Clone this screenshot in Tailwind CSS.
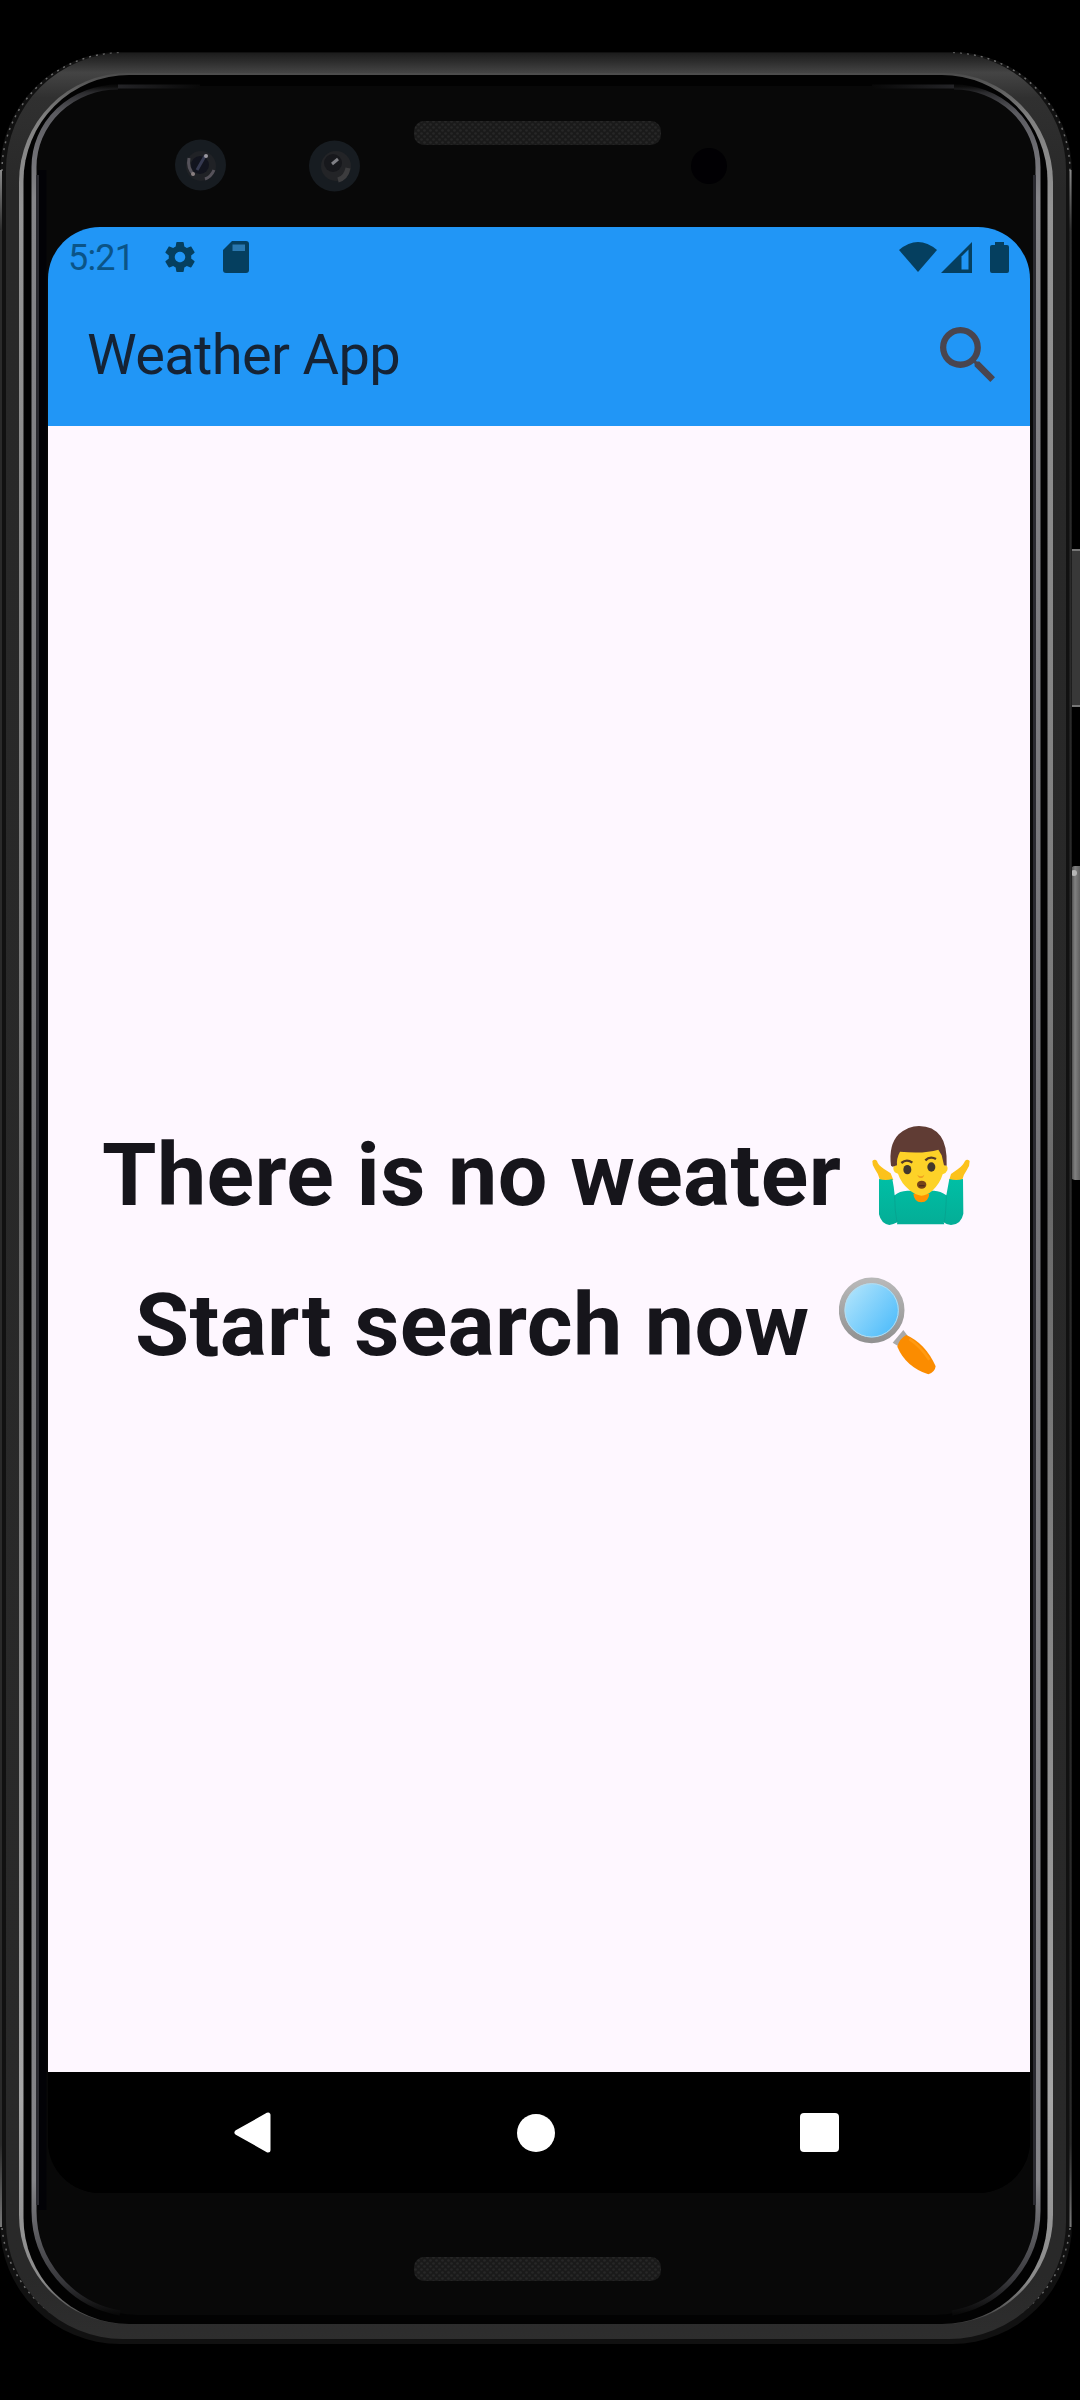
<!DOCTYPE html>
<html lang="en">
<head>
<meta charset="utf-8">
<title>Weather App</title>
<script src="https://cdn.jsdelivr.net/npm/@tailwindcss/browser@4"></script>
</head>
<body class="bg-black">
<div class="grid w-[1080px] h-[2400px] overflow-hidden bg-black font-['Roboto',sans-serif]">
  <!-- Phone body -->
  <svg class="col-start-1 row-start-1 block" width="1080" height="2400" viewBox="0 0 1080 2400" fill="none" aria-hidden="true">
    <defs>
      <linearGradient id="band" x1="0" y1="52" x2="0" y2="2344" gradientUnits="userSpaceOnUse">
        <stop offset="0" stop-color="#1a1a1a"/><stop offset=".004" stop-color="#2c2c2c"/><stop offset=".009" stop-color="#444"/><stop offset=".02" stop-color="#303030"/><stop offset=".06" stop-color="#282828"/><stop offset=".97" stop-color="#292929"/><stop offset="1" stop-color="#2e2e2e"/>
      </linearGradient>
      <linearGradient id="rim" x1="0" y1="72" x2="0" y2="2326" gradientUnits="userSpaceOnUse">
        <stop offset="0" stop-color="#4a4a4a"/><stop offset=".02" stop-color="#808080"/><stop offset=".06" stop-color="#949494"/><stop offset=".42" stop-color="#7a7a7a"/><stop offset=".5" stop-color="#686868"/><stop offset=".9" stop-color="#a6a6a6"/><stop offset=".98" stop-color="#8a8a8a"/><stop offset="1" stop-color="#383838"/>
      </linearGradient>
      <linearGradient id="glass" x1="0" y1="86" x2="0" y2="2314" gradientUnits="userSpaceOnUse">
        <stop offset="0" stop-color="#0a0a0a"/><stop offset=".003" stop-color="#2c2c2f"/><stop offset=".012" stop-color="#5b5b60"/><stop offset=".05" stop-color="#858589"/><stop offset=".5" stop-color="#737377"/><stop offset=".94" stop-color="#858589"/><stop offset=".985" stop-color="#38383c"/><stop offset="1" stop-color="#080808"/>
      </linearGradient>
      <linearGradient id="edge" x1="0" y1="170" x2="0" y2="2227" gradientUnits="userSpaceOnUse">
        <stop offset="0" stop-color="#8a8a8a"/><stop offset=".03" stop-color="#2a2a2a"/><stop offset=".96" stop-color="#2a2a2a"/><stop offset="1" stop-color="#777"/>
      </linearGradient>
      <linearGradient id="key" x1="1070" y1="0" x2="1080" y2="0" gradientUnits="userSpaceOnUse">
        <stop offset="0" stop-color="#333"/><stop offset=".5" stop-color="#818181"/><stop offset="1" stop-color="#606060"/>
      </linearGradient>
      <linearGradient id="tailL" x1="118" y1="0" x2="200" y2="0" gradientUnits="userSpaceOnUse">
        <stop offset="0" stop-color="#242427"/><stop offset="1" stop-color="#080808"/>
      </linearGradient>
      <linearGradient id="tailR" x1="954" y1="0" x2="872" y2="0" gradientUnits="userSpaceOnUse">
        <stop offset="0" stop-color="#242427"/><stop offset="1" stop-color="#080808"/>
      </linearGradient>
      <pattern id="mesh" width="6" height="6" patternUnits="userSpaceOnUse">
        <rect width="6" height="6" fill="#1a1a1a"/><circle cx="1.5" cy="1.5" r="1.3" fill="#272727"/><circle cx="4.5" cy="4.5" r="1.3" fill="#272727"/>
      </pattern>
    </defs>
    <rect x="1069" y="549" width="16" height="158" rx="3" fill="#383838"/>
    <path d="M1071 550h9M1071 706h9" stroke="#777" stroke-width="2"/>
    <rect x="1070" y="866" width="16" height="314" rx="5" fill="url(#key)"/>
    <circle cx="1074" cy="873" r="3" fill="#b5b5b5"/>
    <rect x="0" y="52" width="1072" height="2292" rx="120" fill="#111"/>
    <path d="M2 171A118 118 0 0 1 119 53M953 53A118 118 0 0 1 1070 171M2 2228A118 118 0 0 0 50 2312M1070 2228A118 118 0 0 1 1022 2312" stroke="#6c6c6c" stroke-width="1.5" stroke-dasharray="2 5"/>
    <path d="M1 170V2227M1070.500 170V2227" stroke="url(#edge)" stroke-width="2"/>
    <rect x="6" y="53" width="1060" height="2286" rx="117" fill="url(#band)"/>
    <rect x="19" y="73" width="1034" height="2251" rx="109" fill="url(#rim)"/>
    <rect x="23.500" y="75" width="1024" height="2249" rx="106" fill="#020202"/>
    <path d="M35 166A80 80 0 0 1 115 86H960A80 80 0 0 1 1038 166V2212A103 103 0 0 1 935 2315H138A103 103 0 0 1 35 2212Z" fill="#080808"/>
    <path d="M42 170V2210" stroke="#020206" stroke-width="9"/>
    <path d="M118 87A84 80 0 0 0 34 167V2211A104 104 0 0 0 120 2313M954 87A84 80 0 0 1 1038 167V2211A104 104 0 0 1 952 2313" stroke="url(#glass)" stroke-width="5"/>
    <rect x="118" y="84.500" width="82" height="4" fill="url(#tailL)"/>
    <rect x="872" y="84.500" width="82" height="4" fill="url(#tailR)"/>
    <path d="M37.500 175V2205M1034.500 175V2205" stroke="#2a2a30" stroke-width="3"/>
    <!-- Speakers -->
    <rect x="414" y="121" width="247" height="24" rx="10" fill="url(#mesh)"/>
    <rect x="414" y="2257" width="247" height="24" rx="10" fill="url(#mesh)"/>
    <!-- Cameras -->
    <circle cx="200.500" cy="165" r="25.500" fill="#171c21"/>
    <circle cx="201" cy="166" r="15" fill="#202226"/><circle cx="200" cy="165" r="9" fill="#12141e"/>
    <path d="M189 158q-2 10 5 17M214 170q-3 7-9 9" stroke="#55525a" stroke-width="3"/>
    <path d="M205 156l-8 14" stroke="#353950" stroke-width="3"/><circle cx="206" cy="156" r="2" fill="#9a98a0"/><circle cx="193" cy="174" r="2" fill="#8a7f80"/>
    <circle cx="334.500" cy="166" r="25.500" fill="#171c21"/>
    <circle cx="336" cy="166" r="15" fill="#232427"/><circle cx="333" cy="163" r="9" fill="#17181c"/>
    <path d="M348 168q-2 10-10 12" stroke="#3c3c3e" stroke-width="5"/><path d="M332 164l6-5" stroke="#808086" stroke-width="3"/>
    <circle cx="709" cy="166" r="18" fill="#010003"/>
  </svg>

  <!-- Screen -->
  <main class="z-10 col-start-1 row-start-1 mt-[227px] ml-12 flex h-[1966px] w-[982px] flex-col overflow-hidden rounded-[52px] bg-black">
    <header class="flex h-[199px] flex-col bg-[#2196f6]">
      <div class="flex h-[60px] items-center justify-between pr-[21px] pl-[20px] text-[#053f5f]">
        <div class="flex items-center">
          <span class="w-[97px] pt-[2px] text-[36px] leading-[58px] tracking-[-0.8px] text-[#0b5487]">5:21</span>
          <svg class="-ml-[3px]" width="36" height="36" viewBox="0 0 24 24" fill="currentColor"><path d="M19.430 12.980c.04-.32.070-.64.070-.98s-.03-.66-.07-.98l2.110-1.650c.19-.15.240-.42.120-.64l-2-3.460c-.12-.22-.39-.3-.61-.22l-2.490 1c-.52-.4-1.080-.73-1.690-.98l-.38-2.650C14.460 2.180 14.250 2 14 2h-4c-.25 0-.46.180-.49.420l-.38 2.650c-.61.250-1.170.590-1.690.98l-2.490-1c-.23-.09-.49 0-.61.220l-2 3.460c-.13.220-.07.490.120.640l2.110 1.650c-.04.320-.07.650-.07.980s.03.660.070.980l-2.110 1.650c-.19.150-.24.420-.12.640l2 3.460c.12.220.390.300.610.220l2.490-1c.52.400 1.080.730 1.690.98l.38 2.650c.03.240.240.420.490.420h4c.25 0 .46-.18.490-.42l.38-2.650c.61-.25 1.170-.59 1.690-.98l2.490 1c.23.090.490 0 .61-.22l2-3.460c.12-.22.070-.49-.12-.64l-2.110-1.650zM12 15.500c-1.930 0-3.500-1.570-3.500-3.500s1.570-3.500 3.500-3.500 3.500 1.570 3.500 3.500-1.570 3.500-3.500 3.500z"/></svg>
          <svg class="ml-[25px]" width="26" height="32" viewBox="0 0 26 32"><path d="M9 0H23Q26 0 26 3V29Q26 32 23 32H3Q0 32 0 29V9Z" fill="currentColor"/><path d="M9.500 3.500H22V10H9.500Z" fill="#2a78b0"/></svg>
        </div>
        <div class="flex items-center">
          <svg width="38" height="30" viewBox="0 0 38 30" fill="currentColor"><path d="M0 8Q19-8 38 8L19 30Z"/></svg>
          <svg class="ml-[4px]" width="31" height="31" viewBox="0 0 31 31"><path d="M0 31L31 0V31Z" fill="currentColor"/><path d="M20.500 14.500L27.500 7.500V27.500H20.500Z" fill="#2196f6"/></svg>
          <svg class="ml-[18px]" width="19" height="31" viewBox="0 0 19 31" fill="currentColor"><path d="M5 0H14V3H17Q19 3 19 5V29Q19 31 17 31H2Q0 31 0 29V5Q0 3 2 3H5Z"/></svg>
        </div>
      </div>
      <div class="flex h-[139px] items-center justify-between pr-[35px] pb-[4px] pl-[39px]">
        <h1 class="text-[56px] leading-[64px] tracking-[-0.65px] whitespace-nowrap text-[#152335]">Weather App</h1>
        <svg width="55" height="55" viewBox="3 3 17.490 17.490" fill="#49454f"><path d="M15.500 14h-.79l-.28-.27A6.471 6.471 0 0 0 16 9.500 6.500 6.500 0 1 0 9.500 16c1.610 0 3.090-.59 4.230-1.570l.27.280v.79l5 4.990L20.490 19l-4.990-5zm-6 0C7.010 14 5 11.990 5 9.500S7.010 5 9.500 5 14 7.010 14 9.500 11.990 14 9.500 14z"/></svg>
      </div>
    </header>

    <section class="flex flex-1 flex-col items-center justify-center bg-[#fef7ff] pt-[2px] pr-[6px] text-[88px] leading-[150px] font-bold text-[#16151b]">
      <p class="flex h-[150px] w-[868px] items-center justify-between whitespace-nowrap">
        <span class="tracking-[0.4px]">There is no weater</span>
        <svg width="98" height="99" viewBox="90 75 294 297" role="img" aria-label="Man shrugging">
          <defs><linearGradient id="shirt" x1="0" y1="0" x2="0" y2="1"><stop offset="0" stop-color="#00bfa5"/><stop offset="1" stop-color="#04ad96"/></linearGradient></defs>
          <path d="M91 180q8-8 14 0 3 12 20 23l21 14 8 20h-40q-4-17-15-32-9-12-8-25zM383 180q-8-8-14 0-6 14-22 25l-20 14-6 20h39q3-16 14-31 10-14 9-28z" fill="#fcc21b"/>
          <path d="M111 234q20 6 40 0 5 24 7 49 14-13 38-14h80q20 1 37 14l9-49q20 6 41 0l1 104q-6 32-37 34-13 0-22-8l2 6H165l1-6q-12 7-24 8-25-4-31-32z" fill="url(#shirt)"/>
          <path d="M165 364q-7-35-7-80M307 364q5-30 6-80" fill="none" stroke="#079f8c" stroke-width="2"/>
          <path d="M214 278h48q-2 24-24 26-22-2-24-26z" fill="#ff9300"/>
          <path d="M168 145h138q2 20 4 48 9 2 6 15-4 10-14 12-8 28-31 49-16 14-33 15-18-2-36-17-25-21-34-49-12-2-14-14-1-10 8-11z" fill="#fdd228"/>
          <path d="M147 194q-8-62 23-94 29-25 61-25 43 0 65 31 20 27 18 88l-8-1-7-30-10-17q-43 13-115 6-11 20-9 41l-13 4z" fill="#603c34"/>
          <path d="M178 186q16-14 33-1M250 178q14-14 32-4" fill="none" stroke="#563b27" stroke-width="7"/>
          <ellipse cx="196" cy="206" rx="12" ry="14" fill="#43382c"/><ellipse cx="268" cy="198" rx="12" ry="14" fill="#43382c"/>
          <path d="M226 221q10 9 21 0-3 10-10 10-8 0-11-10z" fill="#f0a021"/>
          <ellipse cx="239" cy="251" rx="14" ry="12" fill="#754319"/><path d="M231 254h17" stroke="#4c2a19" stroke-width="4"/>
        </svg>
      </p>
      <p class="flex h-[150px] w-[802px] items-center justify-between whitespace-nowrap">
        <span class="tracking-[0.35px]">Start search now</span>
        <svg width="98" height="99" viewBox="-4 525 294 297" role="img" aria-label="Magnifying glass">
          <defs>
            <linearGradient id="lens" x1="0" y1="0" x2="1" y2=".8"><stop offset=".1" stop-color="#b3e5fc"/><stop offset=".9" stop-color="#55bffb"/></linearGradient>
            <linearGradient id="ring" x1="0" y1="0" x2="0" y2="1"><stop offset="0" stop-color="#b8b8b8"/><stop offset="1" stop-color="#929292"/></linearGradient>
          </defs>
          <path d="M157 725l32-38 13 17-28 32z" fill="#a9a9a9"/>
          <circle cx="94" cy="628" r="90" fill="url(#lens)" stroke="url(#ring)" stroke-width="17"/>
          <circle cx="94" cy="628" r="80" fill="none" stroke="#b9dcec" stroke-width="3"/>
          <path d="M198 702q58 26 88 94-2 17-22 24-68-23-93-83 6-24 27-35z" fill="#fb8c00"/>
          <path d="M207 714q34 23 60 62" fill="none" stroke="#ff9a12" stroke-width="8"/>
        </svg>
      </p>
    </section>

    <nav class="flex h-[121px] items-center bg-black">
      <div class="flex w-full items-center justify-between pr-[191px] pl-[185px]">
        <svg width="39" height="43" viewBox="0 0 39 43"><path d="M4 21.500L35 4V39Z" fill="#fff" stroke="#fff" stroke-width="5" stroke-linejoin="round"/></svg>
        <span class="size-[38px] rounded-full bg-white"></span>
        <span class="size-[39px] rounded-[4px] bg-white"></span>
      </div>
    </nav>
  </main>
</div>
</body>
</html>
